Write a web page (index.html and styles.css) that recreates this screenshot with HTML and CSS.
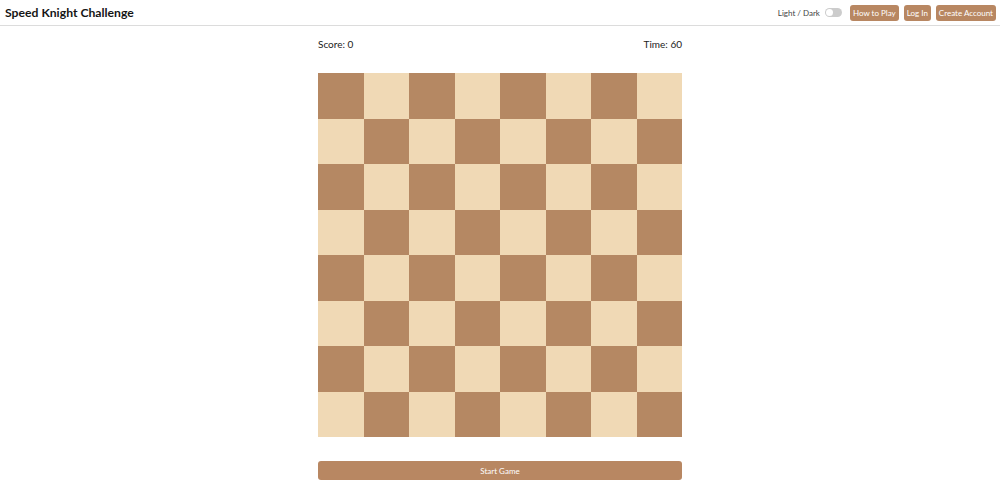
FILE: index.html
```html
<!DOCTYPE html>
<html>
<head>
<meta charset="utf-8">
<link rel="stylesheet" href="styles.css">
</head>
<body>
<header class="topbar">
  <h1 class="title">Speed Knight Challenge</h1>
  <div class="actions">
    <label class="theme">Light / Dark <span class="toggle"><span class="knob"></span></span></label>
    <button class="btn">How to Play</button>
    <button class="btn">Log In</button>
    <button class="btn">Create Account</button>
  </div>
</header>
<main class="game">
  <div class="stats"><span>Score: 0</span><span>Time: 60</span></div>
  <div class="board">
    <div class="sq d"></div><div class="sq l"></div><div class="sq d"></div><div class="sq l"></div><div class="sq d"></div><div class="sq l"></div><div class="sq d"></div><div class="sq l"></div>
    <div class="sq l"></div><div class="sq d"></div><div class="sq l"></div><div class="sq d"></div><div class="sq l"></div><div class="sq d"></div><div class="sq l"></div><div class="sq d"></div>
    <div class="sq d"></div><div class="sq l"></div><div class="sq d"></div><div class="sq l"></div><div class="sq d"></div><div class="sq l"></div><div class="sq d"></div><div class="sq l"></div>
    <div class="sq l"></div><div class="sq d"></div><div class="sq l"></div><div class="sq d"></div><div class="sq l"></div><div class="sq d"></div><div class="sq l"></div><div class="sq d"></div>
    <div class="sq d"></div><div class="sq l"></div><div class="sq d"></div><div class="sq l"></div><div class="sq d"></div><div class="sq l"></div><div class="sq d"></div><div class="sq l"></div>
    <div class="sq l"></div><div class="sq d"></div><div class="sq l"></div><div class="sq d"></div><div class="sq l"></div><div class="sq d"></div><div class="sq l"></div><div class="sq d"></div>
    <div class="sq d"></div><div class="sq l"></div><div class="sq d"></div><div class="sq l"></div><div class="sq d"></div><div class="sq l"></div><div class="sq d"></div><div class="sq l"></div>
    <div class="sq l"></div><div class="sq d"></div><div class="sq l"></div><div class="sq d"></div><div class="sq l"></div><div class="sq d"></div><div class="sq l"></div><div class="sq d"></div>
  </div>
  <button class="start">Start Game</button>
</main>
</body>
</html>
```
FILE: styles.css
```css
* { box-sizing: border-box; }
html, body { margin: 0; padding: 0; background: #fff; }
body { font-family: Lato, "Open Sans", sans-serif; color: #222; }
.topbar {
  height: 26px;
  display: flex;
  align-items: center;
  justify-content: space-between;
  padding: 0 4px 0 5px;
  border-bottom: 1px solid #dcdcdc;
}
.title { margin: 0; font-size: 12.2px; font-weight: 700; color: #151515; }
.actions { display: flex; align-items: center; gap: 5px; }
.theme { display: flex; align-items: center; gap: 5px; font-size: 8px; color: #444; margin-right: 3px; }
.toggle {
  width: 17px; height: 9px; border-radius: 5px;
  background: #ccc; display: flex; align-items: center; padding: 1px;
}
.knob { width: 7px; height: 7px; border-radius: 50%; background: #fff; }
.btn {
  font-family: Lato, sans-serif;
  font-size: 8px;
  color: #fff;
  background: #b88762;
  border: none;
  border-radius: 3px;
  height: 16px;
  padding: 0 3px;
  cursor: pointer;
}
.game { width: 364px; margin: 0 auto; display: flex; flex-direction: column; }
.stats {
  display: flex; justify-content: space-between;
  font-size: 10px; color: #222;
  margin-top: 12px; height: 12px; line-height: 12px;
}
.board {
  margin-top: 23px;
  display: grid;
  grid-template-columns: repeat(8, 45.5px);
  grid-template-rows: repeat(8, 45.5px);
}
.d { background: #b58863; }
.l { background: #f0d9b5; }
.start {
  margin-top: 24px;
  height: 19px;
  border: none;
  border-radius: 3px;
  background: #b88762;
  color: #fff;
  font-family: Lato, sans-serif;
  font-size: 8px;
}
```
